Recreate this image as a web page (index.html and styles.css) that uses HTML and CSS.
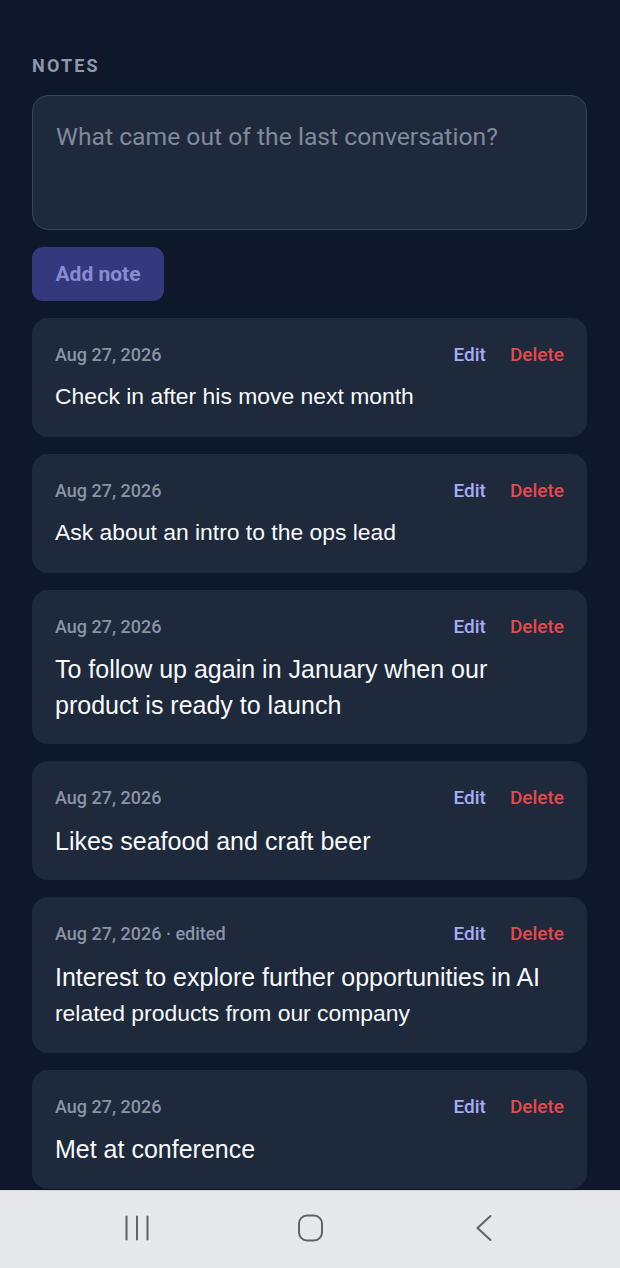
FILE: index.html
```html
<!DOCTYPE html>
<html lang="en">
<head>
<meta charset="utf-8">
<meta name="viewport" content="width=device-width, initial-scale=1">
<title>Notes</title>
<link rel="stylesheet" href="styles.css">
</head>
<body>
<main class="page">
  <h2 class="section-label">NOTES</h2>
  <textarea class="note-input" placeholder="What came out of the last conversation?"></textarea>
  <button class="add-btn" type="button" disabled>Add note</button>

  <ul class="note-list">
    <li class="note-card">
      <div class="note-head">
        <span class="note-date">Aug 27, 2026</span>
        <span class="note-actions"><span class="act-edit">Edit</span><span class="act-delete">Delete</span></span>
      </div>
      <p class="note-text note-text-sm">Check in after his move next month</p>
    </li>
    <li class="note-card">
      <div class="note-head">
        <span class="note-date">Aug 27, 2026</span>
        <span class="note-actions"><span class="act-edit">Edit</span><span class="act-delete">Delete</span></span>
      </div>
      <p class="note-text note-text-sm">Ask about an intro to the ops lead</p>
    </li>
    <li class="note-card">
      <div class="note-head">
        <span class="note-date">Aug 27, 2026</span>
        <span class="note-actions"><span class="act-edit">Edit</span><span class="act-delete">Delete</span></span>
      </div>
      <p class="note-text">To follow up again in January when our product is ready to launch</p>
    </li>
    <li class="note-card">
      <div class="note-head">
        <span class="note-date">Aug 27, 2026</span>
        <span class="note-actions"><span class="act-edit">Edit</span><span class="act-delete">Delete</span></span>
      </div>
      <p class="note-text">Likes seafood and craft beer</p>
    </li>
    <li class="note-card">
      <div class="note-head">
        <span class="note-date">Aug 27, 2026 · edited</span>
        <span class="note-actions"><span class="act-edit">Edit</span><span class="act-delete">Delete</span></span>
      </div>
      <p class="note-text">Interest to explore further opportunities in AI <span class="note-text-sm">related products from our company</span></p>
    </li>
    <li class="note-card">
      <div class="note-head">
        <span class="note-date">Aug 27, 2026</span>
        <span class="note-actions"><span class="act-edit">Edit</span><span class="act-delete">Delete</span></span>
      </div>
      <p class="note-text">Met at conference</p>
    </li>
  </ul>
</main>

<nav class="sys-nav">
  <span class="nav-btn">
    <svg width="30" height="30" viewBox="0 0 30 30" fill="none" stroke="#5f6266" stroke-width="2" stroke-linecap="round">
      <path d="M4.5 3.5v23M15 3.5v23M25.5 3.5v23"/>
    </svg>
  </span>
  <span class="nav-btn">
    <svg width="30" height="30" viewBox="0 0 30 30" fill="none" stroke="#5f6266" stroke-width="2">
      <rect x="4" y="2.5" width="23" height="25" rx="8"/>
    </svg>
  </span>
  <span class="nav-btn">
    <svg width="30" height="30" viewBox="0 0 30 30" fill="none" stroke="#5f6266" stroke-width="2" stroke-linecap="round" stroke-linejoin="round">
      <path d="M22.5 3L9.5 15l13 12"/>
    </svg>
  </span>
</nav>
</body>
</html>
```

FILE: styles.css
```css
* { box-sizing: border-box; }

html, body {
  margin: 0;
  padding: 0;
  background: #0f172a;
}

body {
  font-family: Roboto, "Liberation Sans", Arial, sans-serif;
  color: #f1f5f9;
  overflow: hidden;
}

.page {
  padding: 54px 33px 120px 32px;
  display: flex;
  flex-direction: column;
}

.section-label {
  margin: 0;
  font-size: 18px;
  line-height: 24px;
  font-weight: 700;
  letter-spacing: 2.2px;
  color: #8f98a8;
}

.note-input {
  display: block;
  margin: 16.5px 0 0;
  width: 100%;
  height: 135px;
  padding: 23px 23px 19px;
  background: #1e293b;
  border: 1px solid #364357;
  border-radius: 16px;
  resize: none;
  outline: none;
  font-family: Roboto, sans-serif;
  font-size: 24.7px;
  line-height: 36px;
  color: #e2e8f0;
}

.note-input::placeholder {
  color: #7f8a9b;
}

.add-btn {
  align-self: flex-start;
  margin-top: 17px;
  width: 132px;
  height: 54px;
  padding: 0;
  border: none;
  border-radius: 11px;
  background: #34387d;
  color: #888cd0;
  font-family: Roboto, sans-serif;
  font-size: 21px;
  font-weight: 700;
}

.note-list {
  list-style: none;
  margin: 17px 0 0;
  padding: 0;
  display: flex;
  flex-direction: column;
  gap: 17px;
}

.note-card {
  background: #1e293b;
  border-radius: 16px;
  padding: 24px 23px 21px 23px;
}

.note-head {
  display: flex;
  justify-content: space-between;
  align-items: baseline;
  height: 26px;
  line-height: 26px;
}

.note-date {
  font-size: 18px;
  font-weight: 500;
  color: #8a94a5;
}

.note-actions {
  display: flex;
  gap: 24px;
  font-size: 19px;
  font-weight: 500;
}

.act-edit { color: #a3aef5; }
.act-delete { color: #e5484d; }

.note-text {
  margin: 12.5px 0 0;
  font-family: "Liberation Sans", Arial, sans-serif;
  font-size: 25px;
  line-height: 35.5px;
  color: #f8fafc;
}

.note-text-sm {
  font-size: 22.9px;
}

p.note-text-sm {
  margin: 11px 0 1.5px;
}

.sys-nav {
  position: fixed;
  left: 0;
  right: 0;
  bottom: 0;
  height: 78px;
  background: #e7e8ea;
  border-top: 1px solid #d4d8de;
  display: grid;
  grid-template-columns: repeat(3, 173px);
  justify-content: center;
  align-items: center;
  justify-items: center;
  padding-bottom: 3px;
}

.nav-btn {
  display: flex;
  width: 30px;
  height: 30px;
}
```
